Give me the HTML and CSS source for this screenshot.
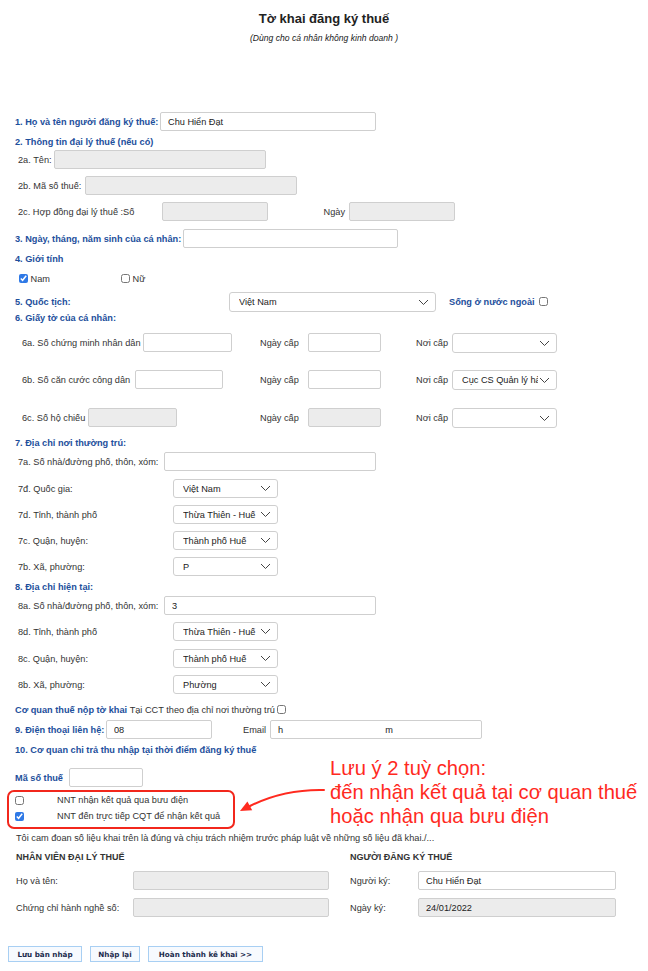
FILE: index.html
```html
<!DOCTYPE html>
<html>
<head>
    <title>Tờ khai đăng ký thuế</title>
    <link rel="stylesheet" href="styles.css">
</head>
<body>
<div class="page">
    <div class="header">
        <h1 class="title">Tờ khai đăng ký thuế</h1>
        <p class="subtitle">(Dùng cho cá nhân không kinh doanh )</p>
    </div>

    <form class="form">
        <div class="row r20">
            <label class="head w145">1. Họ và tên người đăng ký thuế:</label>
            <input class="field w216" value="Chu Hiển Đạt">
        </div>
        <div class="row r18"><span class="head">2. Thông tin đại lý thuế (nếu có)</span></div>
        <div class="row r26 sub">
            <label class="lab w36">2a. Tên:</label>
            <input class="field off w212">
        </div>
        <div class="row r26 sub">
            <label class="lab w67">2b. Mã số thuế:</label>
            <input class="field off w212">
        </div>
        <div class="row r27 sub">
            <label class="lab w144">2c. Hợp đồng đại lý thuế :Số</label>
            <input class="field off w106">
            <label class="lab right w81">Ngày</label>
            <input class="field off w106">
        </div>
        <div class="row r20">
            <label class="head w168">3. Ngày, tháng, năm sinh của cá nhân:</label>
            <input class="field w215">
        </div>
        <div class="row r20"><span class="head">4. Giới tính</span></div>
        <div class="row r23 gender">
            <label class="check w102"><input type="checkbox" checked> Nam</label>
            <label class="check"><input type="checkbox"> Nữ</label>
        </div>
        <div class="row r16">
            <label class="head w214">5. Quốc tịch:</label>
            <select class="pick w207 tall"><option>Việt Nam</option></select>
            <label class="head abroad">Sống ở nước ngoài <input type="checkbox"></label>
        </div>
        <div class="row r25"><span class="head">6. Giấy tờ của cá nhân:</span></div>

        <div class="row r37 doc">
            <div class="cell c1">
                <label class="lab w121">6a. Số chứng minh nhân dân</label>
                <input class="field w89">
            </div>
            <div class="cell c2">
                <label class="lab w48">Ngày cấp</label>
                <input class="field w73">
            </div>
            <div class="cell">
                <label class="lab w36">Nơi cấp</label>
                <select class="pick w105 tall"><option></option></select>
            </div>
        </div>
        <div class="row r38 doc">
            <div class="cell c1">
                <label class="lab w113">6b. Số căn cước công dân</label>
                <input class="field w88">
            </div>
            <div class="cell c2">
                <label class="lab w48">Ngày cấp</label>
                <input class="field w73">
            </div>
            <div class="cell">
                <label class="lab w36">Nơi cấp</label>
                <select class="pick w105 tall"><option>Cục CS Quản lý hành chính về TTXH</option></select>
            </div>
        </div>
        <div class="row r25 doc">
            <div class="cell c1">
                <label class="lab w66">6c. Số hộ chiếu</label>
                <input class="field off w89">
            </div>
            <div class="cell c2">
                <label class="lab w48">Ngày cấp</label>
                <input class="field off w73">
            </div>
            <div class="cell">
                <label class="lab w36">Nơi cấp</label>
                <select class="pick w105 tall"><option></option></select>
            </div>
        </div>

        <div class="row r19"><span class="head">7. Địa chỉ nơi thường trú:</span></div>
        <div class="row r27 sub">
            <label class="lab w146">7a. Số nhà/đường phố, thôn, xóm:</label>
            <input class="field w212">
        </div>
        <div class="row r26 sub">
            <label class="lab w155">7đ. Quốc gia:</label>
            <select class="pick w105"><option>Việt Nam</option></select>
        </div>
        <div class="row r26 sub">
            <label class="lab w155">7d. Tỉnh, thành phố</label>
            <select class="pick w105"><option>Thừa Thiên - Huế</option></select>
        </div>
        <div class="row r26 sub">
            <label class="lab w155">7c. Quận, huyện:</label>
            <select class="pick w105"><option>Thành phố Huế</option></select>
        </div>
        <div class="row r20 sub">
            <label class="lab w155">7b. Xã, phường:</label>
            <select class="pick w105"><option>P</option></select>
        </div>

        <div class="row r19"><span class="head">8. Địa chỉ hiện tại:</span></div>
        <div class="row r26 sub">
            <label class="lab w146">8a. Số nhà/đường phố, thôn, xóm:</label>
            <input class="field w212" value="3">
        </div>
        <div class="row r27 sub">
            <label class="lab w155">8d. Tỉnh, thành phố</label>
            <select class="pick w105"><option>Thừa Thiên - Huế</option></select>
        </div>
        <div class="row r26 sub">
            <label class="lab w155">8c. Quận, huyện:</label>
            <select class="pick w105"><option>Thành phố Huế</option></select>
        </div>
        <div class="row r25 sub">
            <label class="lab w155">8b. Xã, phường:</label>
            <select class="pick w105"><option>Phường</option></select>
        </div>

        <div class="row r20">
            <span class="head">Cơ quan thuế nộp tờ khai</span>
            <label class="lab plain">&nbsp;Tại CCT theo địa chỉ nơi thường trú <input type="checkbox"></label>
        </div>
        <div class="row r20">
            <label class="head w91">9. Điện thoại liên hệ:</label>
            <input class="field w106" value="08">
            <label class="lab right w58">Email</label>
            <input class="field w212" value="h                                        m">
        </div>
        <div class="row r28"><span class="head">10. Cơ quan chi trả thu nhập tại thời điểm đăng ký thuế</span></div>
        <div class="row r22">
            <label class="head w54">Mã số thuế</label>
            <input class="field w74">
        </div>

        <div class="result">
            <label class="option"><input type="checkbox"><span>NNT nhận kết quả qua bưu điện</span></label>
            <label class="option"><input type="checkbox" checked><span>NNT đến trực tiếp CQT để nhận kết quả</span></label>
        </div>

        <div class="row r18 foot"><span class="pledge">Tôi cam đoan số liệu khai trên là đúng và chịu trách nhiệm trước pháp luật về những số liệu đã khai./...</span></div>
        <div class="row r24 foot">
            <div class="cell sign"><span class="caps">NHÂN VIÊN ĐẠI LÝ THUẾ</span></div>
            <div class="cell"><span class="caps">NGƯỜI ĐĂNG KÝ THUẾ</span></div>
        </div>
        <div class="row r27 foot">
            <div class="cell sign">
                <label class="lab w117">Họ và tên:</label>
                <input class="field off w196">
            </div>
            <div class="cell">
                <label class="lab w68">Người ký:</label>
                <input class="field w198" value="Chu Hiển Đạt">
            </div>
        </div>
        <div class="row r46 foot">
            <div class="cell sign">
                <label class="lab w117">Chứng chỉ hành nghề số:</label>
                <input class="field off w196">
            </div>
            <div class="cell">
                <label class="lab w68">Ngày ký:</label>
                <input class="field off w198" value="24/01/2022">
            </div>
        </div>

        <div class="actions">
            <button type="button" class="btn b1">Lưu bản nháp</button>
            <button type="button" class="btn b2">Nhập lại</button>
            <button type="button" class="btn b3">Hoàn thành kê khai &gt;&gt;</button>
        </div>
    </form>

    <div class="note">Lưu ý 2 tuỳ chọn:<br>đến nhận kết quả tại cơ quan thuế<br>hoặc nhận qua bưu điện</div>
    <svg class="arrow" width="95" height="36" viewBox="235 781 95 36">
        <path d="M324 790 Q284 789 250 806" fill="none" stroke="#ff2a1f" stroke-width="2" stroke-linecap="round"/>
        <polygon points="240,811 247.4,801.4 252.2,810.2" fill="#ff2a1f"/>
    </svg>
</div>
</body>
</html>
```

FILE: styles.css
```css
body {
    margin: 0;
    font-family: "Liberation Sans", Arial, sans-serif;
    font-size: 9.2px;
    color: #333;
    background: #fff;
}
.page {
    width: 648px;
    position: relative;
}
.header {
    height: 112px;
    box-sizing: border-box;
    padding-top: 11px;
    text-align: center;
}
.title {
    margin: 0;
    font-size: 13px;
    line-height: 15px;
    font-weight: bold;
    color: #222;
}
.subtitle {
    margin: 7px 0 0;
    font-size: 8.6px;
    line-height: 10px;
    font-style: italic;
    color: #222;
}
.row {
    display: flex;
    align-items: flex-start;
    padding-left: 15px;
}
.row.sub { padding-left: 18px; }
.row.doc { padding-left: 22px; }
.row.gender { padding-left: 19px; }
.row.foot { padding-left: 16px; }
.r16 { height: 16px; }
.r18 { height: 18px; }
.r19 { height: 19px; }
.r20 { height: 20px; }
.r22 { height: 22px; }
.r23 { height: 23px; }
.r24 { height: 24px; }
.r25 { height: 25px; }
.r26 { height: 26px; }
.r27 { height: 27px; }
.r28 { height: 28px; }
.r37 { height: 37px; }
.r38 { height: 38px; }
.r46 { height: 46px; }

.head {
    line-height: 20px;
    font-size: 9.2px;
    font-weight: bold;
    color: #1d4f9c;
    white-space: nowrap;
    flex: none;
}
.lab {
    line-height: 20px;
    white-space: nowrap;
    flex: none;
    box-sizing: border-box;
}
.lab.right {
    text-align: right;
    padding-right: 4px;
}
.lab.plain { color: #333; }
.cell {
    display: flex;
    align-items: flex-start;
    flex: none;
}
.c1 { width: 238px; }
.c2 { width: 156px; }
.sign { width: 334px; }

.w36 { width: 36px; }
.w48 { width: 48px; }
.w54 { width: 54px; }
.w58 { width: 58px; }
.w66 { width: 66px; }
.w67 { width: 67px; }
.w68 { width: 68px; }
.w73 { width: 73px; }
.w74 { width: 74px; }
.w81 { width: 81px; }
.w88 { width: 88px; }
.w89 { width: 89px; }
.w91 { width: 91px; }
.w102 { width: 102px; }
.w105 { width: 105px; }
.w106 { width: 106px; }
.w113 { width: 113px; }
.w117 { width: 117px; }
.w121 { width: 121px; }
.w144 { width: 144px; }
.w145 { width: 145px; }
.w146 { width: 146px; }
.w155 { width: 155px; }
.w168 { width: 168px; }
.w196 { width: 196px; }
.w198 { width: 198px; }
.w207 { width: 207px; }
.w212 { width: 212px; }
.w214 { width: 214px; }
.w215 { width: 215px; }
.w216 { width: 216px; }

.field {
    height: 19px;
    box-sizing: border-box;
    margin: 0;
    padding: 0 7px;
    border: 1px solid #cfcfcf;
    border-radius: 2px;
    background: #fff;
    font-family: inherit;
    font-size: 9.2px;
    color: #222;
    flex: none;
}
.field.off { background: #ececec; }
.pick {
    height: 19px;
    box-sizing: border-box;
    margin: 0;
    padding: 0 18px 0 9px;
    border: 1px solid #cfcfcf;
    border-radius: 3px;
    background: #fff url("data:image/svg+xml;utf8,<svg xmlns='http://www.w3.org/2000/svg' width='11' height='7'><path d='M1 1l4.5 4.5L10 1' fill='none' stroke='%23444' stroke-width='1'/></svg>") no-repeat right 6px center;
    -webkit-appearance: none;
    appearance: none;
    font-family: inherit;
    font-size: 9.2px;
    color: #222;
    flex: none;
}
.pick.tall { height: 20px; }

input[type=checkbox] {
    width: 9px;
    height: 9px;
    margin: 0;
    accent-color: #2f79e6;
    vertical-align: -1px;
}
.check {
    line-height: 20px;
    flex: none;
    color: #333;
}
.abroad { margin-left: 13px; }
.abroad input { margin-left: 2px; }

.result {
    width: 228px;
    height: 39px;
    box-sizing: border-box;
    margin-left: 7px;
    padding-left: 6px;
    border: 2px solid #f2271c;
    border-radius: 7px;
}
.option {
    display: flex;
    align-items: center;
    height: 16px;
    font-size: 9.2px;
    color: #333;
}
.option span { margin-left: 33px; }

.pledge {
    line-height: 18px;
    color: #333;
    white-space: nowrap;
}
.caps {
    line-height: 20px;
    font-size: 9px;
    font-weight: bold;
    color: #333;
}

.actions {
    display: flex;
    padding-left: 8px;
    margin-top: 2px;
}
.btn {
    height: 16px;
    margin: 0 8px 0 0;
    padding: 0;
    border: 1px solid #a8cff3;
    background: #f7fafe;
    font-family: "DejaVu Sans", Verdana, sans-serif;
    font-size: 7.2px;
    font-weight: bold;
    color: #1b2b4d;
    flex: none;
}
.b1 { width: 74px; }
.b2 { width: 50px; }
.b3 { width: 115px; }

.note {
    position: absolute;
    left: 330px;
    top: 756px;
    font-size: 20.2px;
    line-height: 24px;
    color: #ff2a1f;
    white-space: nowrap;
}
.arrow {
    position: absolute;
    left: 235px;
    top: 781px;
}
```
